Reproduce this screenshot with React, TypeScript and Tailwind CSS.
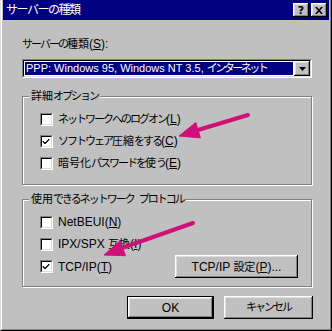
import React from "react";

const raised =
  "shadow-[inset_-1px_-1px_#000,inset_1px_1px_#fff,inset_-2px_-2px_#808080,inset_2px_2px_#dfdfdf]";

// kana run: the original bitmap font draws kana narrow
function J({ children }: { children: React.ReactNode }) {
  return <span className="text-[11px] tracking-[-2px]">{children}</span>;
}

// kanji run: full width
function K({ children }: { children: React.ReactNode }) {
  return <span className="text-[11px] tracking-[0px]">{children}</span>;
}

function Key({ k }: { k: string }) {
  return (
    <>
      (<span className="underline underline-offset-1">{k}</span>)
    </>
  );
}

function Checkbox({ checked }: { checked?: boolean }) {
  return (
    <div className="relative h-[13px] w-[13px] shrink-0 border border-b-white border-l-[#808080] border-r-white border-t-[#808080] bg-white">
      <div className="h-full w-full border border-b-[#dfdfdf] border-l-black border-r-[#dfdfdf] border-t-black">
        {checked && (
          <svg viewBox="0 0 9 9" className="block h-[9px] w-[9px]">
            <path d="M1 4 L3 6 L7 2 L7 3 L3 7 L1 5 Z" fill="#000" stroke="#000" strokeWidth="0.8" />
          </svg>
        )}
      </div>
    </div>
  );
}

function Row({
  checked,
  children,
}: {
  checked?: boolean;
  children: React.ReactNode;
}) {
  return (
    <div className="flex h-[22px] items-center gap-[5px] pl-[17px]">
      <Checkbox checked={checked} />
      <span className="whitespace-pre">{children}</span>
    </div>
  );
}

function Group({
  title,
  children,
  className,
}: {
  title: React.ReactNode;
  children: React.ReactNode;
  className?: string;
}) {
  return (
    <fieldset
      className={
        "m-0 w-[290px] border border-[#808080] p-0 shadow-[inset_1px_1px_#fff,1px_1px_#fff] " +
        (className ?? "")
      }
    >
      <legend className="ml-[6px] whitespace-pre bg-[#c0c0c0] px-[2px] leading-[14px]">
        {title}
      </legend>
      {children}
    </fieldset>
  );
}

function Button({
  children,
  className,
  isDefault,
}: {
  children: React.ReactNode;
  className?: string;
  isDefault?: boolean;
}) {
  return (
    <div
      className={
        "flex h-[23px] items-center justify-center bg-[#c0c0c0] " +
        (isDefault ? "border border-black " : "") +
        (className ?? "")
      }
    >
      <div className={"flex h-full w-full items-center justify-center " + raised}>
        {children}
      </div>
    </div>
  );
}

export default function App() {
  return (
    <div className="relative h-[331px] w-[332px] border-b border-l border-r border-b-black border-l-[#dfdfdf] border-r-black bg-[#c0c0c0] font-['Liberation_Sans','Noto_Sans_CJK_JP',sans-serif] text-[12px] text-black">
      <div className="flex h-full flex-col border-b border-l border-r border-b-[#808080] border-l-white border-r-[#808080]">
        {/* title bar */}
        <div className="mx-[1px] flex h-[20px] items-center bg-[#000080] pl-[3px] pr-[2px]">
          <span className="text-[12px] tracking-[-1.5px] text-white">サーバーの種類</span>
          <div className="ml-auto flex gap-[2px]">
            <div className={"flex h-[14px] w-[16px] items-center justify-center bg-[#c0c0c0] " + raised}>
              <span className="font-['DejaVu_Sans'] text-[11px] font-bold leading-none">?</span>
            </div>
            <div className={"flex h-[14px] w-[16px] items-center justify-center bg-[#c0c0c0] " + raised}>
              <svg viewBox="0 0 8 7" className="h-[7px] w-[8px]">
                <path d="M0 0h2l2 2.2 2-2.2h2L5 3.5 8 7H6L4 4.8 2 7H0l3-3.5z" fill="#000" />
              </svg>
            </div>
          </div>
        </div>

        {/* body */}
        <div className="flex flex-col pl-[20px]">
          <div className="mt-[17px] h-[14px] leading-[14px]">
            <J>サーバーの</J>
            <K>種類</K>
            <Key k="S" />:
          </div>

          <div className="mt-[8px] h-[19px] w-[290px] border border-b-white border-l-[#808080] border-r-white border-t-[#808080]">
            <div className="flex h-full border border-b-[#dfdfdf] border-l-black border-r-[#dfdfdf] border-t-black bg-white">
              <div className="my-[1px] ml-[1px] flex flex-1 items-center whitespace-pre bg-[#000080] pl-[1px] text-[11px] text-white">
                {"PPP: Windows 95, Windows NT 3.5, "}
                <span className="tracking-[-2.5px]">インターネット</span>
              </div>
              <div className={"ml-[1px] flex w-[16px] items-center justify-center bg-[#c0c0c0] " + raised}>
                <svg viewBox="0 0 7 4" className="h-[4px] w-[7px]">
                  <path d="M0 0h7L3.5 4z" fill="#000" />
                </svg>
              </div>
            </div>
          </div>

          <Group
            title={
              <>
                <K>詳細</K>
                <J>オプション</J>
              </>
            }
            className="mt-[11px] pb-[10px] pt-[5px]"
          >
            <Row>
              <J>ネットワークへのログオン</J>
              <Key k="L" />
            </Row>
            <Row checked>
              <J>ソフトウェア</J>
              <K>圧縮</K>
              <J>をする</J>
              <Key k="C" />
            </Row>
            <Row>
              <K>暗号化</K>
              <J>パスワードを</J>
              <K>使</K>
              <J>う</J>
              <Key k="E" />
            </Row>
          </Group>

          <Group
            title={
              <>
                <K>使用</K>
                <J>できるネットワーク</J>
                <span className="inline-block w-[5px]"> </span>
                <J>プロトコル</J>
              </>
            }
            className="mt-[7px] pb-[8px] pt-[5px]"
          >
            <Row>
              NetBEUI<Key k="N" />
            </Row>
            <Row>
              {"IPX/SPX "}
              <K>互換</K>
              <Key k="I" />
            </Row>
            <div className="flex items-center pr-[13px]">
              <div className="flex-1">
                <Row checked>
                  TCP/IP<Key k="T" />
                </Row>
              </div>
              <Button className="w-[123px]">
                <span className="whitespace-pre">
                  {"TCP/IP "}
                  <K>設定</K>
                  <Key k="P" />
                  ...
                </span>
              </Button>
            </div>
          </Group>

          <div className="mt-[9px] flex w-[291px] justify-end gap-[10px]">
            <Button isDefault className="w-[87px]">
              OK
            </Button>
            <Button className="w-[89px]">
              <J>キャンセル</J>
            </Button>
          </div>
        </div>
      </div>

      {/* annotation arrows */}
      <svg
        className="pointer-events-none absolute left-0 top-0 h-[331px] w-[332px]"
        viewBox="0 0 332 331"
      >
        <g fill="#d0107a" stroke="#d0107a">
          <path d="M247 115 L197 130" strokeWidth="4" strokeLinecap="round" />
          <path d="M178 136 L199.4 137.9 L194.8 122.5 Z" strokeWidth="1" />
          <path d="M192 223 L121 248" strokeWidth="4" strokeLinecap="round" />
          <path d="M103 255 L124.5 255.7 L119.1 240.7 Z" strokeWidth="1" />
        </g>
      </svg>
    </div>
  );
}
